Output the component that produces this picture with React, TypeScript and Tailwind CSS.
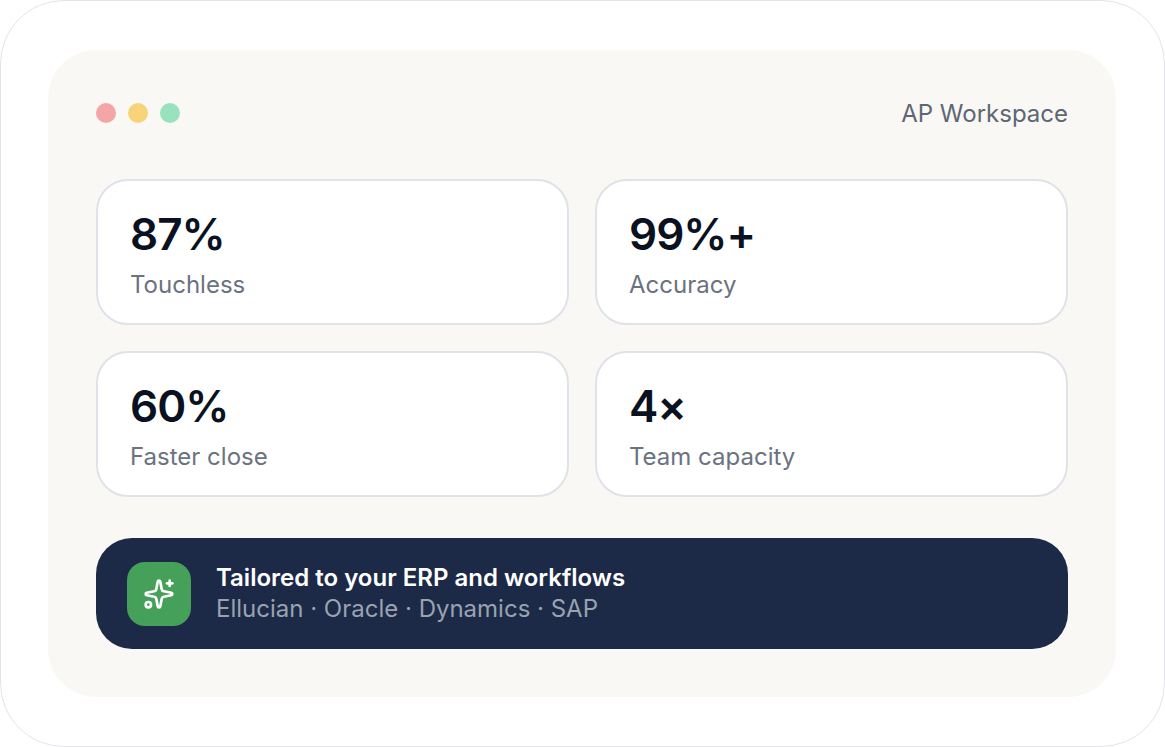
import { Sparkles } from 'lucide-react';

const STATS = [
  { value: '87%', label: 'Touchless' },
  { value: '99%+', label: 'Accuracy' },
  { value: '60%', label: 'Faster close' },
  { value: '4×', label: 'Team capacity' },
];

export default function App() {
  return (
    <div className="h-[747px] w-[1165px] bg-white font-['Inter','Noto_Sans',sans-serif]">
      <div className="flex h-full w-full flex-col rounded-[64px] border border-[#e2e4ea] bg-white pb-[49px] pl-[47px] pr-[48px] pt-[49px]">
        <div className="flex flex-1 flex-col rounded-[48px] bg-[#f9f8f5] px-[48px] pt-[49px]">
          {/* window chrome */}
          <div className="flex h-[28px] items-center justify-between">
            <div className="flex items-center gap-3">
              <span className="h-5 w-5 rounded-full bg-[#f4a6a6]" />
              <span className="h-5 w-5 rounded-full bg-[#f6d477]" />
              <span className="h-5 w-5 rounded-full bg-[#98e2bd]" />
            </div>
            <p className="mt-[2px] text-[24px] leading-7 text-[#5f6673]">AP Workspace</p>
          </div>

          <div className="mt-[52px] grid grid-cols-2 gap-[26px]">
            {STATS.map((s) => (
              <div key={s.label} className="h-[146px] rounded-[32px] border-2 border-[#dfe2e8] bg-white pl-[32px] pt-[31px]">
                <p className="text-[44px] font-semibold leading-[44px] tracking-[-1px] text-[#0a1120]">{s.value}</p>
                <p className="mt-[15px] text-[24px] leading-7 text-[#6b7280]">{s.label}</p>
              </div>
            ))}
          </div>

          {/* ERP banner */}
          <div className="mt-[41px] flex h-[111px] items-center gap-[25px] rounded-[36px] bg-[#1c2a47] px-[31px]">
            <div className="grid h-16 w-16 shrink-0 place-items-center rounded-[18px] bg-[#45a05a]">
              <Sparkles className="h-8 w-8 text-white" strokeWidth={2} />
            </div>
            <div>
              <p className="text-[24px] font-semibold leading-[30px] text-white">Tailored to your ERP and workflows</p>
              <p className="text-[24px] leading-[32px] text-[#9aa2b1]">Ellucian · Oracle · Dynamics · SAP</p>
            </div>
          </div>
        </div>
      </div>
    </div>
  );
}
